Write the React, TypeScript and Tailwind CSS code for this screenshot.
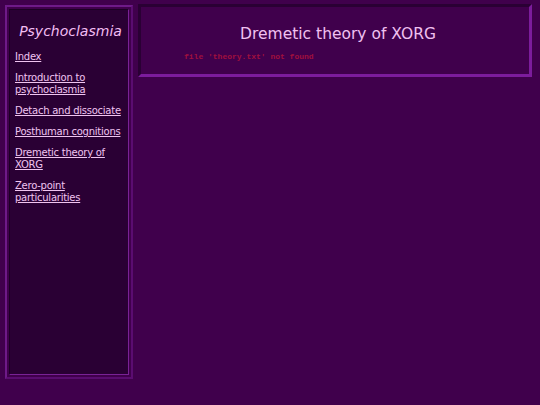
export default function App() {
  const links = [
    "Index",
    "Introduction to psychoclasmia",
    "Detach and dissociate",
    "Posthuman cognitions",
    "Dremetic theory of XORG",
    "Zero-point particularities",
  ];

  return (
    <div
      className="w-[540px] h-[405px] bg-[#40004c] flex items-start gap-[5px] pl-[5px] pt-[4px] overflow-hidden"
      style={{ fontFamily: '"Comic Sans MS", "DejaVu Sans", sans-serif' }}
    >
      {/* Sidebar */}
      <div className="mt-[1px] w-[128px] h-[374px] border-2 border-t-[#6e1a88] border-l-[#6e1a88] border-b-[#5a0c70] border-r-[#5a0c70] p-[2px] shrink-0">
        <div className="w-full h-full bg-[#2a0034] border border-t-[#1c0024] border-l-[#1c0024] border-b-[#7a2296] border-r-[#7a2296] pl-[5px] pr-[2px] pt-[11px]">
          <div className="text-center italic text-[14px] leading-[20px] text-[#f2bdf2] mb-[10px]">
            Psychoclasmia
          </div>
          <div className="flex flex-col gap-[9px] w-[113px]">
            {links.map((l) => (
              <a
                key={l}
                href="#"
                className="text-[10px] leading-[12px] tracking-[-0.25px] text-[#f0c4f0] underline"
              >
                {l}
              </a>
            ))}
          </div>
        </div>
      </div>

      {/* Main panel */}
      <div className="w-[394px] h-[73px] border-[3px] border-t-[#2a0034] border-l-[#2a0034] border-b-[#7c1c9c] border-r-[#7c1c9c] bg-[#40004c] flex flex-col items-center pt-[17px]">
        <div className="text-[15.5px] leading-[20px] text-[#f0c0f0] ml-[6px]">
          Dremetic theory of XORG
        </div>
        <div
          className="self-start ml-[43px] mt-[8px] text-[8px] leading-[10px] font-bold text-[#a0103e]"
          style={{ fontFamily: '"Liberation Mono", monospace' }}
        >
          file 'theory.txt' not found
        </div>
      </div>
    </div>
  );
}
